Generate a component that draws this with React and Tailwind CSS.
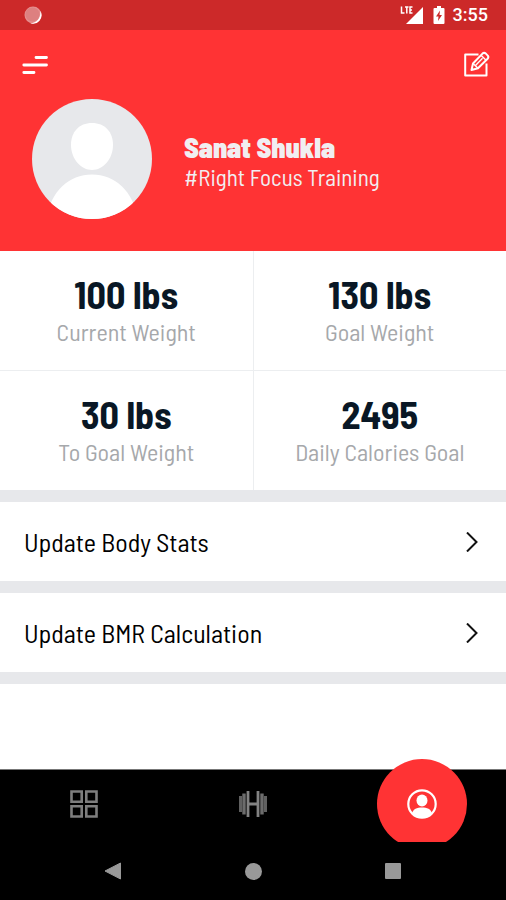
import React from "react";

const stats = [
  { value: "100 lbs", label: "Current Weight" },
  { value: "130 lbs", label: "Goal Weight" },
  { value: "30 lbs", label: "To Goal Weight" },
  { value: "2495", label: "Daily Calories Goal" },
];

const actions = ["Update Body Stats", "Update BMR Calculation"];

function StatusBar() {
  return (
    <div className="flex h-[30px] items-center justify-between bg-[#cc2929] pr-[18px] pl-6 text-white">
      <svg className="size-[18px]" viewBox="0 0 18 18" aria-hidden="true">
        <circle cx="9" cy="9" r="8.5" fill="#e58e8e" />
        <path d="M16.2 4.8A8.5 8.5 0 0 1 6 17.2C13 17.500 17 11.500 16.200 4.800Z" fill="#fff" />
        <circle cx="8.500" cy="8.500" r="7" fill="#dd8080" />
      </svg>
      <div className="flex items-center">
        <svg className="h-5 w-6" viewBox="0 0 24 20" aria-hidden="true">
          <path d="M23 2V19H6Z" fill="#fff" />
          <path d="M1.500 1.500V8H4.500M5 2H8.500M6.800 2V8.500M12.500 2H10V8H12.500M10 5H12" fill="none" stroke="#fff" strokeWidth="1.500" />
        </svg>
        <svg className="ml-[9px] h-5 w-3" viewBox="0 0 12 20" aria-hidden="true">
          <path d="M4 1H8V3H10.500Q11.500 3 11.500 4V18Q11.500 19 10.500 19H1.500Q0.500 19 0.500 18V4Q0.500 3 1.500 3H4Z" fill="#fff" />
          <path d="M7 5.500L3 11.500H5.500L5 16L9 10H6.500Z" fill="#cc2929" />
        </svg>
        <span className="ml-[8px] font-[Roboto,sans-serif] text-[18px] leading-6 font-medium">3:55</span>
      </div>
    </div>
  );
}

function Header() {
  return (
    <header className="bg-[#ff3334] pb-8 text-[#f1eef1]">
      <div className="flex h-[69px] items-center justify-between pr-4 pl-[22px]">
        <button type="button" aria-label="Menu">
          <svg className="h-5 w-[27px]" viewBox="0 0 27 20" fill="none" stroke="#fff" strokeWidth="2.800" strokeLinecap="round" aria-hidden="true">
            <path d="M14 2.500H24.500M1.800 10H24.500M1.800 17.500H12" />
          </svg>
        </button>
        <button type="button" aria-label="Edit profile">
          <svg className="size-[27px]" viewBox="0 0 27 27" fill="none" stroke="#fff" strokeWidth="2" strokeLinejoin="round" aria-hidden="true">
            <path d="M15.500 3.500H2.200V24.500H23.500V12.500" />
            <path d="M8.500 19L10 12.500L19.500 2.600Q21 1.200 22.600 2.400L24.800 4.600Q26 6.200 24.600 7.700L15 17.300Z" />
            <path d="M12.500 14.500L19.500 7.300M18.300 4.500L22.800 9M10 12.500L15 17.300" strokeWidth="1.400" />
          </svg>
        </button>
      </div>
      <div className="flex items-center gap-8 pl-8">
        <svg className="size-[120px] shrink-0" viewBox="0 0 120 120" role="img" aria-label="Profile photo">
          <defs>
            <clipPath id="avatar">
              <circle cx="60" cy="60" r="60" />
            </clipPath>
          </defs>
          <g clipPath="url(#avatar)">
            <rect width="120" height="120" fill="#e7e8eb" />
            <path d="M60 24C73 24 81 33 81 46C81 60 71 71 60 71C49 71 39 60 39 46C39 33 47 24 60 24Z" fill="#fff" />
            <path d="M14 120C19 92 37 75.500 60 75.500S101 92 106 120Z" fill="#fff" />
          </g>
        </svg>
        <div className="pt-1">
          <h1 className="text-[28px] leading-8 font-black">Sanat Shukla</h1>
          <p className="text-[23px] leading-7">#Right Focus Training</p>
        </div>
      </div>
    </header>
  );
}

function Stats() {
  return (
    <dl className="grid grid-cols-2 gap-px bg-[#eceef0]">
      {stats.map((stat) => (
        <div key={stat.label} className="flex h-[119px] flex-col-reverse items-center justify-center bg-white pb-1.5">
          <dt className="text-[24px] leading-7 text-[#a6a8ab]">{stat.label}</dt>
          <dd className="text-[38px] leading-[48px] font-bold text-[#091725]">{stat.value}</dd>
        </div>
      ))}
    </dl>
  );
}

function Actions() {
  return (
    <div className="flex flex-col gap-3 bg-[#e7e8eb] py-3">
      {actions.map((label) => (
        <button key={label} type="button" className="flex h-[79px] items-center justify-between bg-white pr-7 pl-6 text-left text-[26px] text-black">
          {label}
          <svg className="h-5 w-3" viewBox="0 0 12 20" fill="none" stroke="#111" strokeWidth="2" aria-hidden="true">
            <path d="M1 0.500L10.500 10L1 19.500" />
          </svg>
        </button>
      ))}
    </div>
  );
}

function TabBar() {
  return (
    <nav className="relative grid h-[73px] grid-cols-3 border-t border-[#777] bg-black">
      <button type="button" aria-label="Dashboard" className="flex items-center justify-center pb-1">
        <svg className="size-7" viewBox="0 0 28 28" fill="none" stroke="#7e7e7e" strokeWidth="2.600" aria-hidden="true">
          <path d="M1.500 1.500H11.700V11.700H1.500ZM16.300 1.500H26.500V11.700H16.300ZM1.500 16.300H11.700V26.500H1.500ZM16.300 16.300H26.500V26.500H16.300Z" />
        </svg>
      </button>
      <button type="button" aria-label="Workouts" className="flex items-center justify-center pb-1">
        <svg className="size-7" viewBox="0 0 28 28" fill="none" aria-hidden="true">
          <path d="M1.500 6V22M26.500 6V22" stroke="#606060" strokeWidth="3" />
          <path d="M5 3.500V24.500M23 3.500V24.500" stroke="#6c6c6c" strokeWidth="3.400" />
          <path d="M9 1V27M19 1V27M9 14H19" stroke="#828282" strokeWidth="2.800" />
        </svg>
      </button>
      <div className="relative">
        <button type="button" aria-label="Profile" aria-current="page" className="absolute top-[-11px] left-1/2 flex size-[90px] -translate-x-1/2 items-center justify-center rounded-full bg-[#ff3334]">
          <svg className="size-[30px]" viewBox="0 0 30 30" aria-hidden="true">
            <circle cx="15" cy="15" r="13.700" fill="none" stroke="#fff" strokeWidth="2.200" />
            <ellipse cx="15" cy="11.500" rx="5.500" ry="6" fill="#fff" />
            <path d="M5 24.500C6 20 10 18.500 15 18.500S24 20 25 24.500Q21 29 15 29T5 24.500Z" fill="#fff" />
          </svg>
        </button>
      </div>
    </nav>
  );
}

function SystemBar() {
  return (
    <div className="relative z-10 grid h-[58px] grid-cols-3 bg-black px-[43px]">
      <button type="button" aria-label="Back" className="flex items-center justify-center">
        <svg className="size-[18px]" viewBox="0 0 18 18" aria-hidden="true">
          <path d="M16.500 1V17L1 9Z" fill="#999" stroke="#999" strokeLinejoin="round" />
        </svg>
      </button>
      <button type="button" aria-label="Home" className="flex items-center justify-center">
        <span className="size-[17px] rounded-full bg-[#999]" />
      </button>
      <button type="button" aria-label="Recent apps" className="flex items-center justify-center">
        <span className="size-4 rounded-[1px] bg-[#999]" />
      </button>
    </div>
  );
}

export default function App() {
  return (
    <div className="flex min-h-screen flex-col bg-white font-['Barlow_Semi_Condensed','Liberation_Sans_Narrow','Roboto',sans-serif]">
      <StatusBar />
      <Header />
      <main className="flex-1">
        <Stats />
        <Actions />
      </main>
      <TabBar />
      <SystemBar />
    </div>
  );
}
